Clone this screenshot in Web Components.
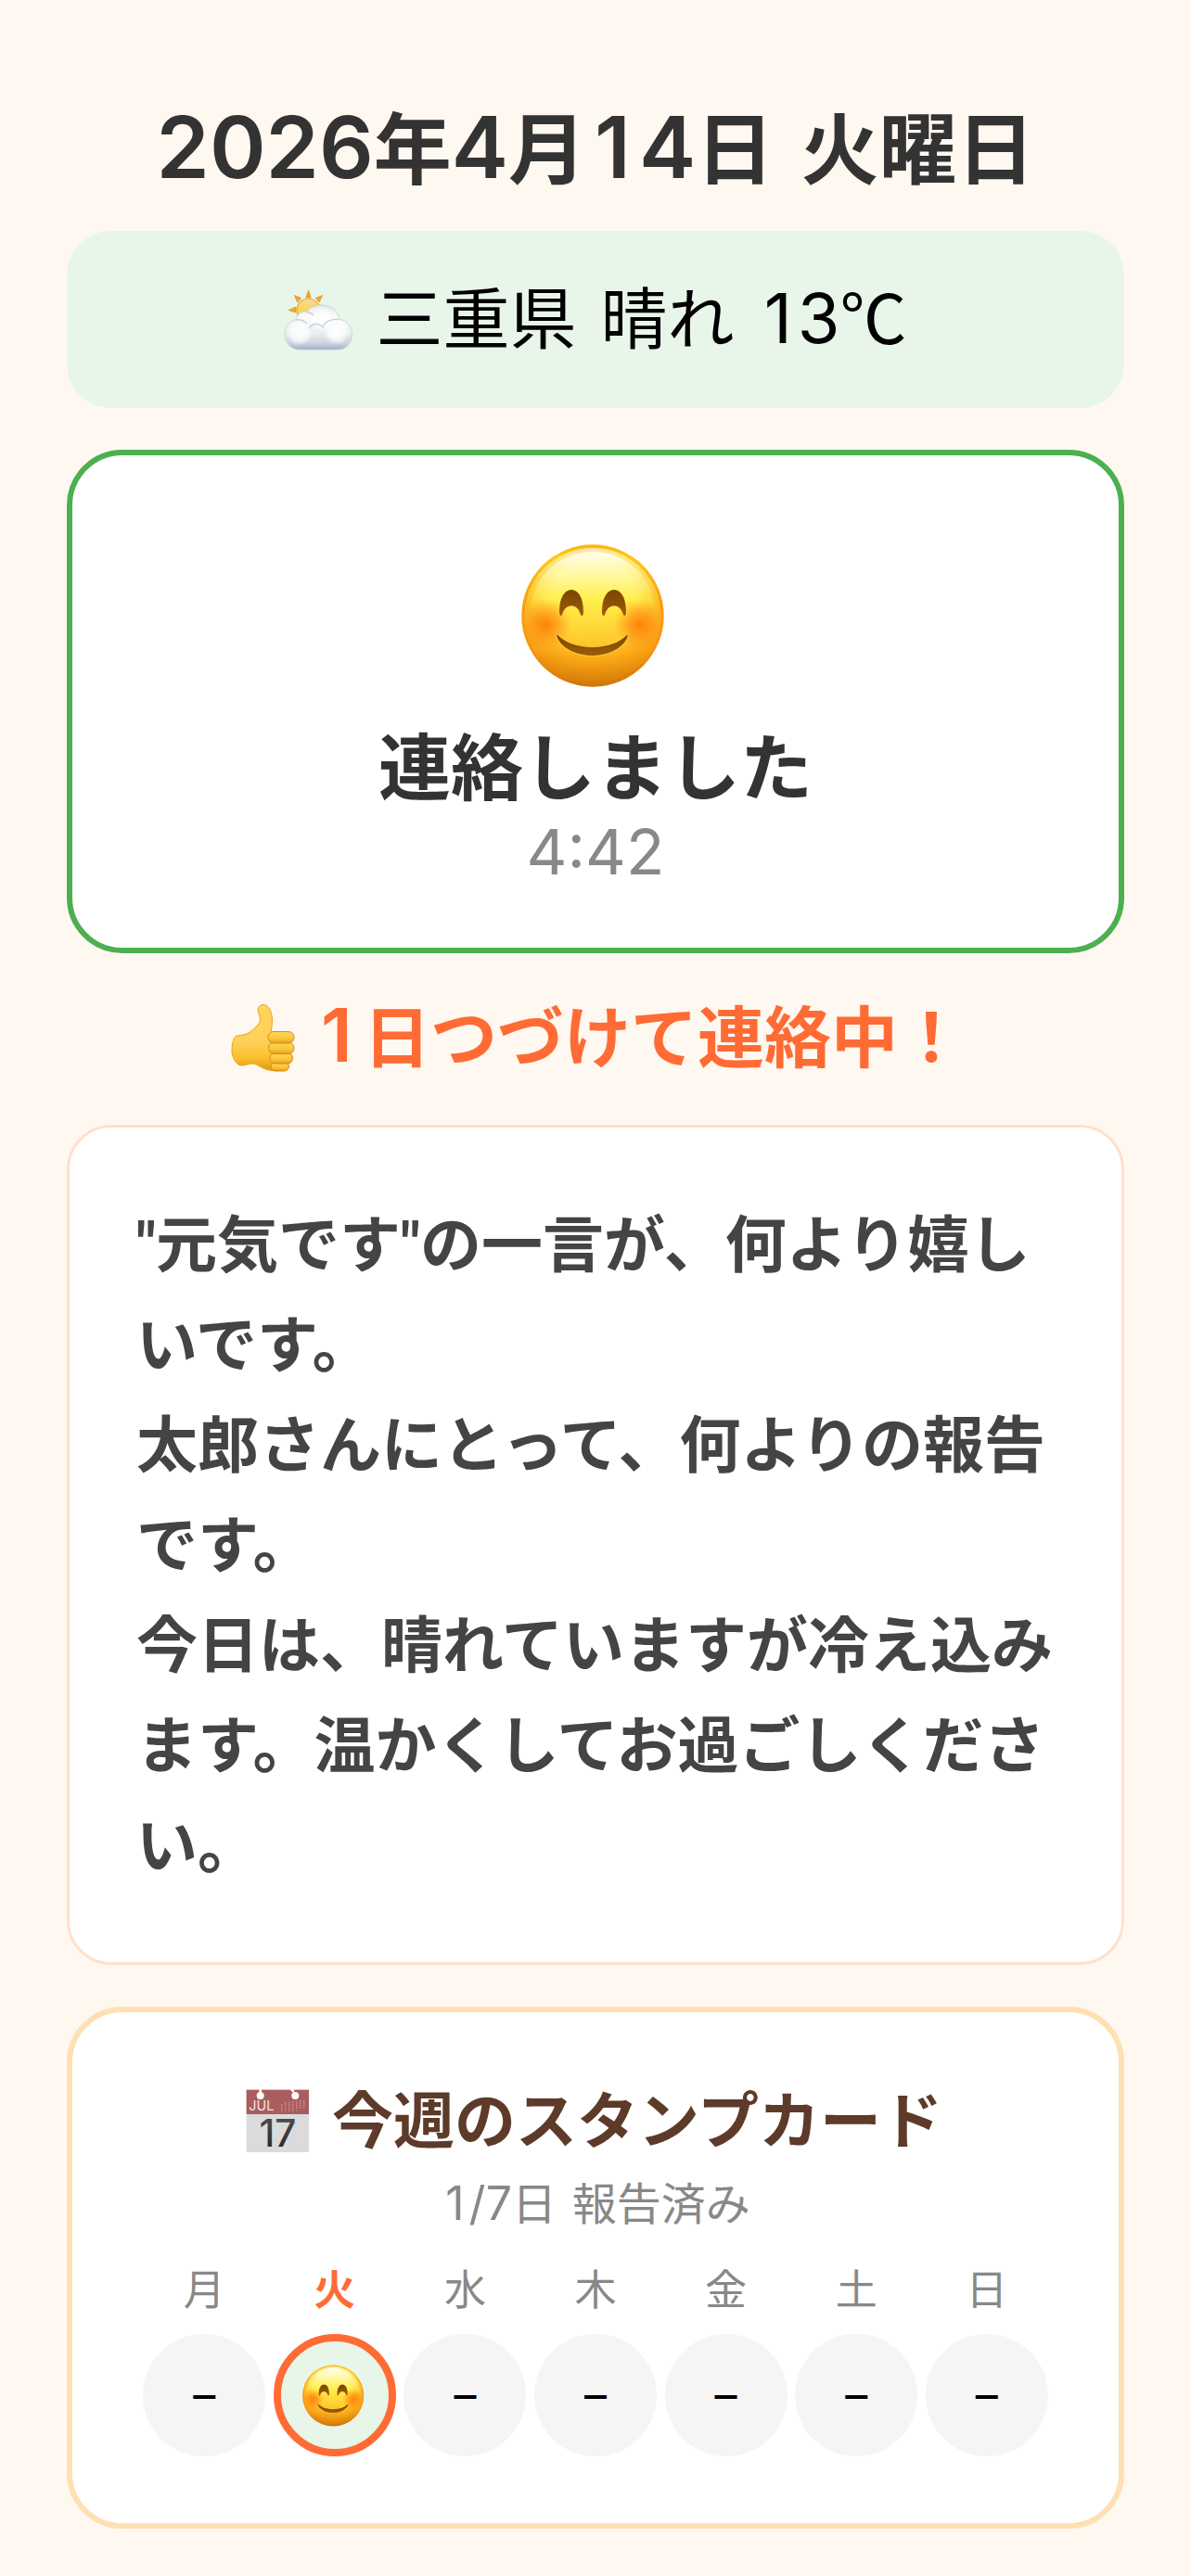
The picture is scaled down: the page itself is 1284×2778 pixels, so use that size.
<!DOCTYPE html>
<html lang="ja">
<head>
<meta charset="utf-8">
<meta name="viewport" content="width=device-width, initial-scale=1">
<title>今日の連絡</title>
<style>
  body {
    margin: 0;
    background: #fff8f0;
    color: #000;
    font-family: "Noto Sans CJK JP", "Noto Sans", sans-serif;
  }
</style>
</head>
<body>
<daily-page>
  <page-date year="2026" month="4" day="14" weekday="火曜日"></page-date>
  <weather-bar place="三重県" sky="晴れ" temp="13"></weather-bar>
  <status-card time="4:42">連絡しました</status-card>
  <streak-line days="1">日つづけて連絡中！</streak-line>
  <message-card>"元気です"の一言が、何より嬉しいです。<br>太郎さんにとって、何よりの報告です。<br>今日は、晴れていますが冷え込みます。温かくしてお過ごしください。</message-card>
  <stamp-card heading="今週のスタンプカード">
    <stamp-day label="月"></stamp-day>
    <stamp-day label="火" today></stamp-day>
    <stamp-day label="水"></stamp-day>
    <stamp-day label="木"></stamp-day>
    <stamp-day label="金"></stamp-day>
    <stamp-day label="土"></stamp-day>
    <stamp-day label="日"></stamp-day>
  </stamp-card>
</daily-page>

<script>
const define = (name, render) => customElements.define(name, class extends HTMLElement {
  connectedCallback() {
    if (this.shadowRoot) return;
    this.attachShadow({ mode: 'open' }).innerHTML = render(this);
  }
});

// The digit 1 gets side padding so that it takes about as much room as the other digits.
const digits = text => `<span class="num">${String(text).replace(/1/g, '<span class="one">1</span>')}</span>`;

define('daily-page', () => `
  <style>
    :host { display: block; }
    main { display: flex; flex-direction: column; padding: 96px 72px 48px; }
  </style>
  <main><slot></slot></main>`);

define('page-date', el => `
  <style>
    :host { display: block; margin-bottom: 33px; }
    h1 { margin: 0; font-size: 84px; line-height: 120px; font-weight: 700; color: #333; text-align: center; }
    .num { font: 600 92px/1 Inter, sans-serif; }
    .one { padding: 0 9px; }
    .part { margin-left: 10px; }
  </style>
  <h1>${digits(el.getAttribute('year'))}年${digits(el.getAttribute('month'))}月${digits(el.getAttribute('day'))}日 <span class="part">${el.getAttribute('weekday')}</span></h1>`);

define('face-icon', () => `
  <style>
    :host { display: block; width: var(--face, 160px); height: var(--face, 160px); }
    svg { display: block; width: 100%; height: 100%; overflow: visible; }
  </style>
  <svg viewBox="66 42 480 480" aria-hidden="true">
    <defs>
      <linearGradient id="rim" x1="0" y1="0" x2="0" y2="1">
        <stop offset="0" stop-color="#fdb30f"/><stop offset=".08" stop-color="#ffc814"/>
        <stop offset=".4" stop-color="#fb9c12"/><stop offset=".75" stop-color="#f59410"/>
        <stop offset="1" stop-color="#cf7606"/>
      </linearGradient>
      <linearGradient id="skin" x1="0" y1="0" x2="0" y2="1">
        <stop offset="0" stop-color="#fffde6"/><stop offset=".18" stop-color="#fffaa0"/>
        <stop offset=".36" stop-color="#fff048"/><stop offset=".6" stop-color="#ffd537"/>
        <stop offset=".82" stop-color="#ffb31c"/><stop offset="1" stop-color="#eb9b10"/>
      </linearGradient>
      <radialGradient id="fade" cx=".5" cy=".42" r=".58">
        <stop offset="0" stop-color="#fff"/><stop offset=".55" stop-color="#fff"/>
        <stop offset="1" stop-color="#fff" stop-opacity=".05"/>
      </radialGradient>
      <linearGradient id="sheen" x1="0" y1="0" x2="0" y2="1">
        <stop offset="0" stop-color="#fffef0"/><stop offset=".3" stop-color="#fffab0" stop-opacity=".6"/>
        <stop offset="1" stop-color="#ffe93a" stop-opacity="0"/>
      </linearGradient>
      <radialGradient id="blush">
        <stop offset="0" stop-color="#ff7a06" stop-opacity=".9"/>
        <stop offset=".45" stop-color="#ff850c" stop-opacity=".6"/>
        <stop offset="1" stop-color="#ff9a1a" stop-opacity="0"/>
      </radialGradient>
      <linearGradient id="ink" x1="0" y1="0" x2="0" y2="1">
        <stop offset="0" stop-color="#7a4300"/><stop offset="1" stop-color="#9d5e08"/>
      </linearGradient>
      <mask id="m"><circle cx="297" cy="284" r="222" fill="url(#fade)"/></mask>
    </defs>
    <circle cx="297" cy="282" r="230" fill="url(#rim)"/>
    <g mask="url(#m)"><circle cx="297" cy="284" r="222" fill="url(#skin)"/></g>
    <path d="M297 76C400 76 484 150 497 250C440 285 380 290 297 290S154 285 97 250C110 150 194 76 297 76Z" fill="url(#sheen)"/>
    <circle cx="146" cy="310" r="84" fill="url(#blush)"/>
    <circle cx="448" cy="310" r="84" fill="url(#blush)"/>
    <g fill="url(#ink)" stroke="#ffe640" stroke-opacity=".55" stroke-width="5" paint-order="stroke">
      <path d="M189 270C189 225 205 198 228 198S267 225 267 270C267 285 259 285 257 276C251 258 240 250 228 250S205 258 199 276C197 285 189 285 189 270Z"/>
      <path d="M327 270C327 225 343 198 366 198S405 225 405 270C405 285 397 285 395 276C389 258 378 250 366 250S343 258 337 276C335 285 327 285 327 270Z"/>
      <path d="M182 343C208 371 250 384 296 384S384 371 409 343C416 352 384 411 296 411S175 352 182 343Z"/>
    </g>
  </svg>`);

define('weather-icon', () => `
  <style>:host, svg { display: block; width: 75px; height: 86px; }</style>
  <svg viewBox="0 0 75 86" aria-hidden="true">
    <defs>
      <linearGradient id="sun" x1="0" y1="0" x2="0" y2="1"><stop offset="0" stop-color="#f7dc9a"/><stop offset=".5" stop-color="#fbd45c"/><stop offset="1" stop-color="#ffe23e"/></linearGradient>
      <linearGradient id="cl" gradientUnits="userSpaceOnUse" x1="0" y1="33" x2="0" y2="81"><stop offset="0" stop-color="#e6e9ee"/><stop offset=".3" stop-color="#fafbfc"/><stop offset=".65" stop-color="#e9ecf0"/><stop offset=".86" stop-color="#ccd4de"/><stop offset="1" stop-color="#9fb0c5"/></linearGradient>
      <radialGradient id="puff" cx=".5" cy=".5" r=".5"><stop offset="0" stop-color="#fff"/><stop offset=".6" stop-color="#fff" stop-opacity=".7"/><stop offset="1" stop-color="#fff" stop-opacity="0"/></radialGradient>
    </defs>
    <g fill="#f5a81c" stroke="#d98c12" stroke-width=".6">
      <path d="M26.500 17l2.700 8h-5.400zM11.500 22.500l7.200 3-4 4.600zM41.500 22.500l-7.200 3 4 4.600zM5 38.500l8-3.500v6z"/>
    </g>
    <circle cx="26.500" cy="38.500" r="12.500" fill="url(#sun)" stroke="#eda629" stroke-width="1.200"/>
    <path d="M17 81A16 16 0 0 1 1 64C1 56 6 50.500 13 49C14 43 19 39 25 40C28 35.500 33 33 41 33C51 33 58 39 60 48.500C68 49 73.500 56 73.500 64.500C73.500 74 67 81 58 81Z" fill="url(#cl)" stroke="#c3ccd8" stroke-width=".8"/>
    <circle cx="41" cy="48" r="14" fill="url(#puff)"/>
    <circle cx="17" cy="63" r="14" fill="url(#puff)"/>
    <circle cx="57" cy="62" r="14" fill="url(#puff)"/>
    <path d="M13 49C18 48 22 50 25 53M24 40.500C27 40.500 30 42 32 44M42 57C43 52 49 48 59 48.500M27 58C31 52 39 52 43 58" fill="none" stroke="#c8cfd9" stroke-width="1.300"/>
  </svg>`);

define('weather-bar', el => `
  <style>
    :host { display: block; margin-bottom: 45px; }
    section { display: flex; justify-content: center; align-items: center; gap: 24px; padding: 45px 48px 56px; border-radius: 48px; background: #e8f5e9; }
    p { margin: 0; font-size: 72px; line-height: 90px; }
    .num { font: 400 74px/1 Inter, sans-serif; }
    .one { padding: 0 6px; }
    .part { margin-left: 10px; }
  </style>
  <section>
    <weather-icon></weather-icon>
    <p>${el.getAttribute('place')} <span class="part">${el.getAttribute('sky')}</span> <span class="part">${digits(el.getAttribute('temp'))}℃</span></p>
  </section>`);

define('status-card', el => `
  <style>
    :host { display: block; }
    section { display: flex; flex-direction: column; align-items: center; padding: 93px 48px 64px; border: 6px solid #4caf50; border-radius: 60px; background: #fff; }
    h2 { margin: 34px 0 10px; font-size: 78px; line-height: 90px; font-weight: 700; color: #333; }
    time { font: 400 68px/80px Inter, sans-serif; color: #888; }
  </style>
  <section>
    <face-icon></face-icon>
    <h2><slot></slot></h2>
    <time>${el.getAttribute('time')}</time>
  </section>`);

define('thumb-icon', () => `
  <style>:host, svg { display: block; width: 78px; height: 90px; }</style>
  <svg viewBox="0 0 78 90" aria-hidden="true">
    <defs>
      <linearGradient id="hand" x1="0" y1="0" x2="0" y2="1"><stop offset="0" stop-color="#ffd45e"/><stop offset=".55" stop-color="#ffd05a"/><stop offset=".8" stop-color="#fac02f"/><stop offset="1" stop-color="#e19a14"/></linearGradient>
      <linearGradient id="fin" x1="0" y1="0" x2="0" y2="1"><stop offset="0" stop-color="#ffd75a"/><stop offset=".6" stop-color="#fcc638"/><stop offset="1" stop-color="#e5a01a"/></linearGradient>
    </defs>
    <path d="M40 14.500C44.500 14 49 21 49.500 30C49.700 37 48 41 49 45L60 48L58 85.500C52 86 46 85.500 41 83.500C36 81.500 33 78.500 29 78C24 78 19 80.500 14.500 80C9 77 6 70 6 64C6 57 7.500 51 10 48.500C13 47 18 48 23 45.500C29 42 35 36 36.500 32C37.500 28 34 24 34 19.500C34.200 16.500 37 14.800 40 14.500Z" fill="url(#hand)" stroke="#e8a41c" stroke-width="1"/>
    <g fill="url(#fin)" stroke="#cd8410" stroke-width=".9">
      <rect x="48" y="76" width="19.500" height="10" rx="5"/>
      <rect x="47" y="66.500" width="24.500" height="11.500" rx="5.500"/>
      <rect x="45.500" y="55" width="27.500" height="12.500" rx="6"/>
      <rect x="45" y="43.500" width="28" height="12.500" rx="6"/>
    </g>
  </svg>`);

define('streak-line', el => `
  <style>
    :host { display: block; margin: 36px 0 49px; }
    div { display: flex; justify-content: center; align-items: center; gap: 24px; }
    p { margin: 0; font-size: 72px; line-height: 100px; font-weight: 700; color: #ff6b35; }
    .num { font: 600 80px/1 Inter, sans-serif; }
    .one { padding-right: 12px; }
  </style>
  <div><thumb-icon></thumb-icon><p>${digits(el.getAttribute('days'))}<slot></slot></p></div>`);

define('message-card', () => `
  <style>
    :host { display: block; margin-bottom: 45px; }
    section { padding: 74px 72px 70px; border: 3px solid #ffe0cc; border-radius: 48px; background: #fff; }
    p { margin: 0; font: 700 66px/108px Roboto, "Noto Sans CJK JP", sans-serif; color: #444; }
  </style>
  <section><p><slot></slot></p></section>`);

define('calendar-icon', () => `
  <style>:host, svg { display: block; width: 70px; height: 82px; } svg { overflow: visible; }</style>
  <svg viewBox="0 0 210 246" aria-hidden="true">
    <defs><linearGradient id="d" x1="0" y1="0" x2="0" y2="1"><stop offset="0" stop-color="#555"/><stop offset="1" stop-color="#222"/></linearGradient></defs>
    <rect x="5" y="38" width="202" height="202" fill="#dbdbdb"/>
    <rect x="5" y="38" width="202" height="79" fill="#aa5d5f"/>
    <g fill="#fff">
      <circle cx="50" cy="57" r="12"/><rect x="46" y="36" width="8" height="14"/>
      <circle cx="163" cy="57" r="12"/><path d="M145 36h14v12l-6-4z"/>
    </g>
    <g stroke="#cf9a9b" stroke-width="4" stroke-dasharray="4 3">
      <path d="M119 84v24M131 79v29M143 78v30M155 76v32M167 74v30M179 73v26M191 72v28"/>
    </g>
    <text x="13" y="105" font-family="Inter, sans-serif" font-size="43" fill="#f3e3e3">JUL</text>
    <text x="106" y="221" text-anchor="middle" font-family="Inter, sans-serif" font-size="121" font-weight="500" fill="url(#d)">17</text>
  </svg>`);

define('stamp-day', el => {
  const today = el.hasAttribute('today');
  return `
  <style>
    :host { display: flex; flex-direction: column; align-items: center; gap: 25px; --face: 69px; }
    .label { font-size: 45px; line-height: 50px; color: #888; }
    .stamp { display: flex; justify-content: center; align-items: center; box-sizing: border-box; width: 132px; height: 132px; border-radius: 50%; background: #f5f5f5; font: 400 48px/60px Inter, sans-serif; }
    :host([today]) .label { color: #ff6b35; font-weight: 700; }
    :host([today]) .stamp { border: 8px solid #ff6b35; background: #e8f5e9; }
  </style>
  <span class="label">${el.getAttribute('label')}</span>
  <span class="stamp">${today ? '<face-icon></face-icon>' : '–'}</span>`;
});

define('stamp-card', el => `
  <style>
    :host { display: block; }
    section { padding: 70px 72px 72px; border: 6px solid #ffe0b2; border-radius: 60px; background: #fff; }
    header { display: flex; justify-content: center; align-items: center; gap: 24px; padding-right: 4px; }
    h2 { margin: 0; font-size: 66px; line-height: 84px; font-weight: 700; color: #5d3a29; }
    p { margin: 19px 0 39px; font-size: 48px; line-height: 60px; color: #888; text-align: center; }
    .num { font: 400 50px/1 Inter, sans-serif; }
    .one { padding: 0 5px; }
    .part { margin-left: 6px; }
    .week { display: grid; grid-template-columns: repeat(7, 1fr); }
  </style>
  <section>
    <header><calendar-icon></calendar-icon><h2>${el.getAttribute('heading')}</h2></header>
    <p>${digits(el.querySelectorAll('[today]').length + '/' + el.children.length)}日 <span class="part">報告済み</span></p>
    <div class="week"><slot></slot></div>
  </section>`);
</script>
</body>
</html>
